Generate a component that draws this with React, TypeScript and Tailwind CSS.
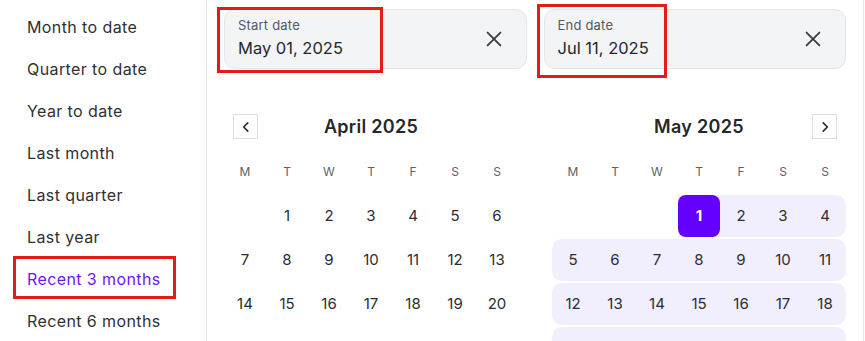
import React from "react";

const presets = [
  "Month to date",
  "Quarter to date",
  "Year to date",
  "Last month",
  "Last quarter",
  "Last year",
  "Recent 3 months",
  "Recent 6 months",
];

const days = ["M", "T", "W", "T", "F", "S", "S"];

function XIcon() {
  return (
    <svg width="22" height="22" viewBox="0 0 24 24" fill="none" stroke="#3a3d42" strokeWidth="2" strokeLinecap="round">
      <path d="M5 5l14 14M19 5L5 19" />
    </svg>
  );
}

function Chevron({ dir }: { dir: "l" | "r" }) {
  return (
    <svg width="14" height="14" viewBox="0 0 24 24" fill="none" stroke="#2b2f36" strokeWidth="3" strokeLinecap="round" strokeLinejoin="round">
      {dir === "l" ? <path d="M15 5l-7 7 7 7" /> : <path d="M9 5l7 7-7 7" />}
    </svg>
  );
}

function DateInput({ label, value }: { label: string; value: string }) {
  return (
    <div className="flex h-[60px] flex-1 items-start justify-between rounded-[11px] border border-[#e3e5e8] bg-[#f3f4f6] pl-[13px] pr-[21px]">
      <div className="flex flex-col pt-[7px]">
        <span className="text-[13px] leading-[16px] tracking-[0.2px] text-[#54585e]">{label}</span>
        <span className="mt-[5px] text-[16.5px] leading-[20px] text-[#25272b]">{value}</span>
      </div>
      <div className="flex h-full items-center">
        <XIcon />
      </div>
    </div>
  );
}

function April() {
  const rows: (number | null)[][] = [
    [null, 1, 2, 3, 4, 5, 6],
    [7, 8, 9, 10, 11, 12, 13],
    [14, 15, 16, 17, 18, 19, 20],
  ];
  return (
    <div className="w-[294px]">
      <div className="relative flex h-[25px] items-center justify-center">
        <div className="absolute left-[9px] top-0 flex h-[25px] w-[25px] items-center justify-center border border-[#dcdfe3] bg-white">
          <Chevron dir="l" />
        </div>
        <span className="text-[18px] font-semibold tracking-[0.3px] text-[#25272b]">April 2025</span>
      </div>
      <div className="mt-[12px] grid h-[42px] grid-cols-7 items-center">
        {days.map((d, i) => (
          <span key={i} className="text-center text-[12px] text-[#5d6167]">{d}</span>
        ))}
      </div>
      <div className="mt-[2px] flex flex-col gap-[2px]">
        {rows.map((r, i) => (
          <div key={i} className="grid h-[42px] grid-cols-7 items-center">
            {r.map((d, j) => (
              <span key={j} className="text-center text-[15px] text-[#2b2d31]">{d ?? ""}</span>
            ))}
          </div>
        ))}
      </div>
    </div>
  );
}

function May() {
  const rows: number[][] = [
    [5, 6, 7, 8, 9, 10, 11],
    [12, 13, 14, 15, 16, 17, 18],
  ];
  return (
    <div className="w-[294px]">
      <div className="relative flex h-[25px] items-center justify-center">
        <span className="text-[18px] font-semibold tracking-[0.3px] text-[#25272b]">May 2025</span>
        <div className="absolute right-[9px] top-0 flex h-[25px] w-[25px] items-center justify-center border border-[#dcdfe3] bg-white">
          <Chevron dir="r" />
        </div>
      </div>
      <div className="mt-[12px] grid h-[42px] grid-cols-7 items-center">
        {days.map((d, i) => (
          <span key={i} className="text-center text-[12px] text-[#5d6167]">{d}</span>
        ))}
      </div>
      <div className="mt-[2px] flex flex-col gap-[2px]">
        <div className="grid h-[42px] grid-cols-7">
          <span />
          <span />
          <span />
          <div className="col-span-4 flex rounded-r-[10px] bg-[#f1eefd]">
            <span className="flex h-[42px] w-[42px] items-center justify-center rounded-[8px] bg-[#6300ff] text-[15px] font-bold text-white">1</span>
            {[2, 3, 4].map((d) => (
              <span key={d} className="flex h-[42px] flex-1 items-center justify-center text-[15px] text-[#2b2d31]">{d}</span>
            ))}
          </div>
        </div>
        {rows.map((r, i) => (
          <div key={i} className="grid h-[42px] grid-cols-7 items-center rounded-[10px] bg-[#f1eefd]">
            {r.map((d, j) => (
              <span key={j} className="text-center text-[15px] text-[#2b2d31]">{d}</span>
            ))}
          </div>
        ))}
        <div className="h-[42px] rounded-[10px] bg-[#f1eefd]" />
      </div>
    </div>
  );
}

export default function App() {
  return (
    <div
      className="relative flex h-[341px] w-[865px] overflow-hidden bg-white"
      style={{ fontFamily: "Inter, 'Noto Sans', sans-serif" }}
    >
      <aside className="flex w-[207px] shrink-0 flex-col border-r border-[#e3e4e6] pt-[6px]">
        {presets.map((p) => {
          const active = p === "Recent 3 months";
          return (
            <div key={p} className="relative flex h-[42px] shrink-0 items-center px-[27px]">
              <span className={`text-[16px] tracking-[0.4px] ${active ? "text-[#6b17f5]" : "text-[#2e3034]"}`}>{p}</span>
              {active && (
                <div className="absolute left-[13px] top-[-2px] h-[43px] w-[163px] border-[3px] border-[#e31b1b]" />
              )}
            </div>
          );
        })}
      </aside>
      <main className="relative flex w-[656px] shrink-0 flex-col px-[17px] pt-[9px]">
        <div className="flex gap-[17px]">
          <DateInput label="Start date" value="May 01, 2025" />
          <DateInput label="End date" value="Jul 11, 2025" />
        </div>
        <div className="mt-[45px] flex justify-between">
          <April />
          <May />
        </div>
        <div className="absolute left-[10px] top-[7px] h-[66px] w-[166px] border-[3px] border-[#e31b1b]" />
        <div className="absolute left-[330px] top-[4px] h-[74px] w-[130px] border-[3px] border-[#e31b1b]" />
      </main>
      <div className="w-[2px] shrink-0 border-l border-[#e6e7e9] bg-[#fafafa]" />
    </div>
  );
}
